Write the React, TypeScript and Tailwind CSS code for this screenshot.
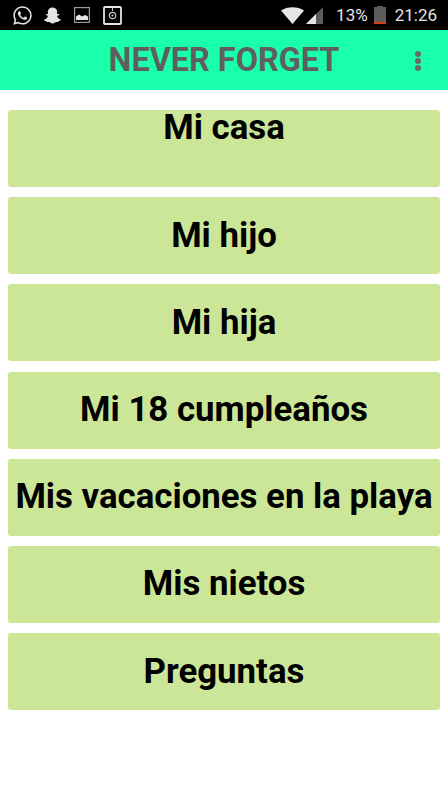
import React from "react";
import { FaWhatsapp, FaSnapchatGhost } from "react-icons/fa";

const items: [string, string][] = [
  ["Mi casa", "pt-0"],
  ["Mi hijo", "items-center pb-[2px]"],
  ["Mi hija", "items-center pb-[2px]"],
  ["Mi 18 cumpleaños", "items-center pb-[2px]"],
  ["Mis vacaciones en la playa", "items-center pb-[2px]"],
  ["Mis nietos", "items-center pb-[2px]"],
  ["Preguntas", "items-center pb-[2px]"],
];

export default function App() {
  return (
    <div className="w-[448px] h-[797px] bg-white overflow-hidden font-['Roboto',sans-serif]">
      <div className="h-[30px] bg-black flex items-center pl-[12px] pr-[11px] text-[#e4e4e4]">
        <FaWhatsapp className="w-[21px] h-[21px]" />
        <FaSnapchatGhost className="w-[17px] h-[17px] ml-[11px]" />
        <svg viewBox="0 0 16 16" className="w-[16px] h-[16px] ml-[13px]">
          <rect x="0.6" y="0.6" width="14.8" height="14.8" fill="none" stroke="#9a9a9a" strokeWidth="1.2" />
          <path d="M2 13V9.5L5 7.5L8 9.5L11 8L14 9.5V13Z" fill="#e4e4e4" />
        </svg>
        <svg viewBox="0 0 19 19" className="w-[19px] h-[19px] ml-[13px]">
          <rect x="1" y="1" width="17" height="17" rx="1" fill="none" stroke="#e4e4e4" strokeWidth="1.8" />
          <circle cx="9.5" cy="9.5" r="3.2" fill="none" stroke="#c8c8c8" strokeWidth="1.2" />
          <circle cx="9.5" cy="9.5" r="1" fill="#c8c8c8" />
          <path d="M9.5 1V5" stroke="#c8c8c8" strokeWidth="1" />
        </svg>
        <svg viewBox="0 0 23 17" className="w-[23px] h-[17px] ml-auto">
          <path d="M0 3.5C6 -1 17 -1 23 3.5L11.5 17Z" fill="#e6e6e6" />
        </svg>
        <svg viewBox="0 0 17 17" className="w-[17px] h-[17px] ml-[2px]">
          <path d="M17 0V17H0Z" fill="#5c5c5c" />
          <path d="M10 7V17H0Z" fill="#e6e6e6" />
        </svg>
        <span className="text-[17px] leading-none ml-[13px]">13%</span>
        <div className="ml-[6px] w-[12px] h-[18px] flex flex-col items-center">
          <div className="w-[6px] h-[1px] bg-[#5c5c5c]" />
          <div className="w-[12px] h-[17px] bg-[#5c5c5c] flex flex-col justify-end">
            <div className="h-[2px] bg-[#d8401c]" />
          </div>
        </div>
        <span className="text-[17px] leading-none ml-[9px]">21:26</span>
      </div>
      <div className="relative h-[59.5px] bg-[#1affab] flex items-center justify-center">
        <span className="text-[32.4px] font-bold text-[#5f5f5f] leading-none">NEVER FORGET</span>
        <div className="absolute right-[27px] top-[21px] flex flex-col gap-[1px]">
          <div className="w-[6px] h-[6px] rounded-full bg-[#6a6a6a]" />
          <div className="w-[6px] h-[6px] rounded-full bg-[#6a6a6a]" />
          <div className="w-[6px] h-[6px] rounded-full bg-[#6a6a6a]" />
        </div>
      </div>
      <div className="flex flex-col gap-[10.2px] px-[8px] pt-[20.5px]">
        {items.map(([label, align]) => (
          <div
            key={label}
            className={`h-[77px] bg-[#cce698] rounded-[3px] flex justify-center ${align} text-[34.8px] font-bold text-black leading-[34px] whitespace-nowrap`}
          >
            {label}
          </div>
        ))}
      </div>
    </div>
  );
}
